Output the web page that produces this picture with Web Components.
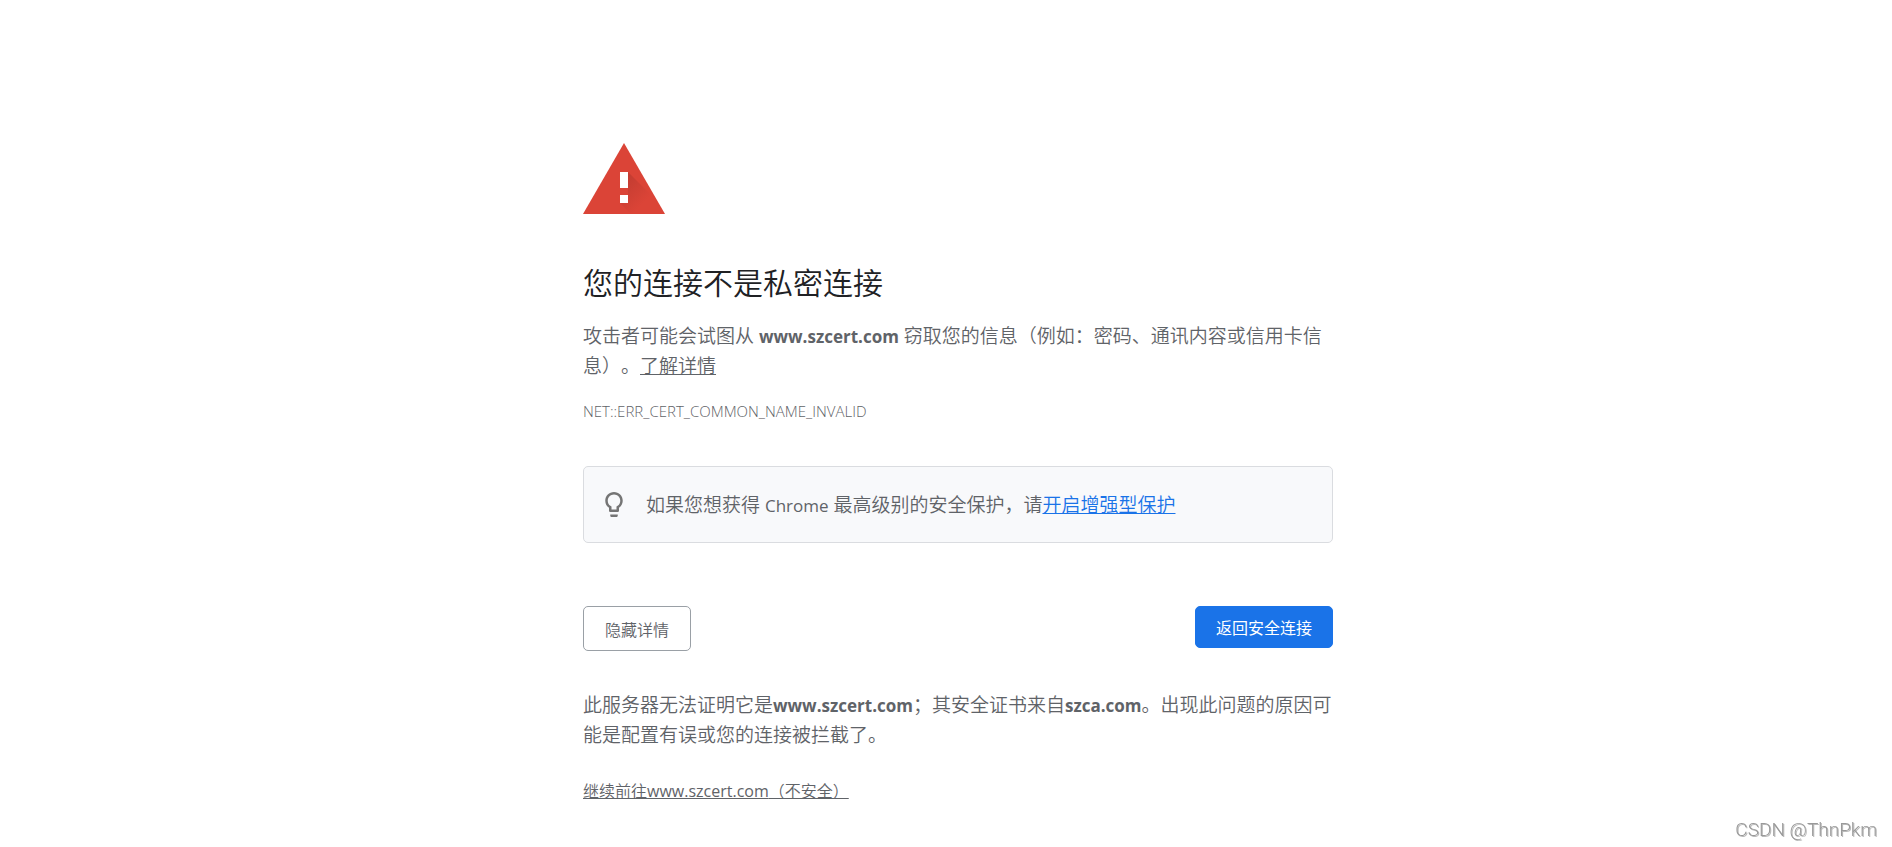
<!DOCTYPE html>
<html lang="zh-CN">
<head>
<meta charset="utf-8">
<meta name="viewport" content="width=device-width, initial-scale=1">
<title>隐私设置错误</title>
<style>
    :root {
        --heading: #202124;
        --text: #5f6368;
        --link: #1a73e8;
        --line: #dadce0;
        --tip: #f8f9fb;
    }
    body {
        margin: 0;
        background: #fff;
        color: var(--text);
        font: 350 19px/30px "Open Sans", "Noto Sans CJK SC", sans-serif;
        text-spacing-trim: space-all;
    }
</style>
</head>
<body>
<privacy-page>
    <warning-icon slot="icon"></warning-icon>
    <error-message slot="message" host="www.szcert.com" code="NET::ERR_CERT_COMMON_NAME_INVALID">您的连接不是私密连接</error-message>
    <safety-tip slot="tip"></safety-tip>
    <action-button slot="actions">隐藏详情</action-button>
    <action-button slot="actions" primary>返回安全连接</action-button>
    <error-details slot="details" host="www.szcert.com" issuer="szca.com"></error-details>
    <water-mark slot="mark">CSDN @ThnPkm</water-mark>
</privacy-page>

<script>
const define = (name, html, setup) => {
    const template = document.createElement('template')
    template.innerHTML = html
    customElements.define(name, class extends HTMLElement {
        constructor() {
            super()
            this.attachShadow({mode: 'open'}).append(template.content.cloneNode(true))
        }

        connectedCallback() {
            if (setup) setup(this, this.shadowRoot)
        }
    })
}

// copies the host's attributes into every matching [data-text]
const fill = (host, root) => {
    root.querySelectorAll('[data-text]').forEach(node => {
        node.textContent = host.getAttribute(node.dataset.text)
    })
}

const paragraphStyle = `
    p {
        margin: 0;
    }
    strong {
        font-size: 17px;
        font-weight: 700;
        line-height: 1;
    }
    a {
        color: inherit;
    }
`

define('privacy-page', `
    <style>
        :host {
            display: block;
            padding: 143px 24px 40px 48px;
        }
        main {
            max-width: 750px;
            margin: 0 auto;
        }
        .tip {
            margin-top: 43px;
        }
        .actions {
            display: flex;
            justify-content: space-between;
            align-items: flex-start;
            margin: 63px 0 39px;
        }
    </style>
    <main>
        <slot name="icon"></slot>
        <slot name="message"></slot>
        <div class="tip"><slot name="tip"></slot></div>
        <div class="actions"><slot name="actions"></slot></div>
        <slot name="details"></slot>
    </main>
    <slot name="mark"></slot>
`)

define('warning-icon', `
    <style>
        :host,
        svg {
            display: block;
        }
    </style>
    <svg width="82" height="71" viewBox="0 0 82 71" aria-hidden="true">
        <defs>
            <linearGradient id="shade" x1="40" y1="36" x2="62" y2="58" gradientUnits="userSpaceOnUse">
                <stop stop-color="#c23c31"/>
                <stop offset="1" stop-color="#db4437"/>
            </linearGradient>
        </defs>
        <path fill="#db4437" d="M41 0 82 71H0Z"/>
        <path fill="url(#shade)" d="M45 29 68 52 79 71H48L37 60V52H45Z"/>
        <path fill="#fff" d="M37 29h8v16h-8zM37 52h8v8h-8z"/>
    </svg>
`)

define('error-message', `
    <style>
        :host {
            display: block;
        }
        h1 {
            margin: 51px 0 20px;
            color: var(--heading);
            font-size: 30px;
            font-weight: inherit;
            line-height: 36px;
        }
        ${paragraphStyle}
        .code {
            margin-top: 18px;
            font-size: 15px;
            line-height: 24px;
        }
    </style>
    <h1><slot></slot></h1>
    <p>攻击者可能会试图从 <strong data-text="host"></strong> 窃取您的信息（例如：密码、通讯内容或信用卡信息）。<a href="#">了解详情</a></p>
    <p class="code" data-text="code"></p>
`, fill)

define('safety-tip', `
    <style>
        :host {
            display: flex;
            align-items: center;
            gap: 17px;
            box-sizing: border-box;
            min-height: 77px;
            padding: 15px;
            border: 1px solid var(--line);
            border-radius: 5px;
            background: var(--tip);
        }
        svg {
            flex: none;
        }
        a {
            color: var(--link);
        }
        .brand {
            font-size: 17px;
            font-weight: 400;
            line-height: 1;
        }
    </style>
    <svg width="30" height="30" viewBox="0 0 24 24" fill="#757575" aria-hidden="true">
        <path d="M9 20.500c0 .5.4 1 1 1h4c.6 0 1-.5 1-1v-1H9v1zm3-19C8.100 1.500 5 4.600 5 8.500c0 2.400 1.200 4.500 3 5.700v2.300c0 .5.4 1 1 1h6c.6 0 1-.5 1-1v-2.300c1.800-1.300 3-3.400 3-5.700 0-3.900-3.100-7-7-7zm2.900 11.100l-.9.600v2.300h-4v-2.300l-.9-.6C7.800 11.700 7 10.100 7 8.500c0-2.800 2.200-5 5-5s5 2.200 5 5c0 1.600-.8 3.200-2.100 4.100z"/>
    </svg>
    <div>如果您想获得 <span class="brand">Chrome</span> 最高级别的安全保护，请<a href="#">开启增强型保护</a></div>
`)

define('action-button', `
    <style>
        :host {
            display: block;
        }
        button {
            padding: 12px 21px 9px;
            border: 1px solid #9aa0a6;
            border-radius: 5px;
            background: #fff;
            color: var(--text);
            font: inherit;
            font-size: 16px;
            line-height: 22px;
            cursor: pointer;
        }
        :host([primary]) button {
            padding: 10px 20px 8px;
            border-color: var(--link);
            background: var(--link);
            color: #fff;
            font-weight: 400;
        }
    </style>
    <button type="button"><slot></slot></button>
`)

define('error-details', `
    <style>
        :host {
            display: block;
        }
        ${paragraphStyle}
        .proceed {
            margin-top: 29px;
            font-size: 16px;
            line-height: 24px;
        }
        .proceed span {
            font-weight: 400;
        }
    </style>
    <p>此服务器无法证明它是<strong data-text="host"></strong>；其安全证书来自<strong data-text="issuer"></strong>。出现此问题的原因可能是配置有误或您的连接被拦截了。</p>
    <p class="proceed"><a href="#">继续前往<span data-text="host"></span>（不安全）</a></p>
`, fill)

define('water-mark', `
    <style>
        :host {
            position: fixed;
            right: 15px;
            bottom: 5px;
            color: #999;
            font: 300 19px/24px Roboto, sans-serif;
            text-shadow: 1px 1px 0 #bbb;
        }
    </style>
    <slot></slot>
`)
</script>
</body>
</html>
